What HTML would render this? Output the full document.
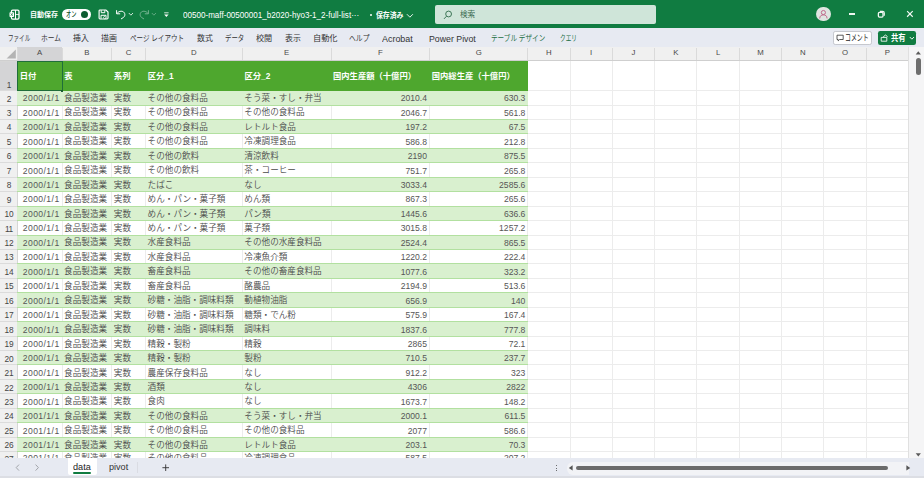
<!DOCTYPE html><html lang="ja"><head><meta charset="utf-8"><title>Excel</title><style>

html,body{margin:0;padding:0;background:#fff;}
body{width:924px;height:478px;overflow:hidden;position:relative;font-family:"Liberation Sans", "Noto Sans CJK JP", sans-serif;}
#app{position:absolute;left:0;top:0;width:924px;height:478px;overflow:hidden;}
.c{position:absolute;height:12px;line-height:12px;font-size:8.6px;color:#4a4a4a;white-space:nowrap;font-weight:350;}
.c.num{font-size:8.6px;color:#565656;font-weight:400;}
.h{position:absolute;height:12px;line-height:12px;font-size:8.3px;font-weight:700;color:#fff;white-space:nowrap;}
.rn{position:absolute;left:0.3px;width:17.2px;letter-spacing:-0.3px;height:12px;line-height:12px;font-size:8.3px;color:#444;text-align:center;white-space:nowrap;}
.cl{position:absolute;width:20px;height:12px;line-height:12px;font-size:7.8px;color:#484848;text-align:center;}
.t{position:absolute;white-space:nowrap;transform-origin:0 50%;}

</style></head><body><div id="app">
<div style="position:absolute;left:0.00px;top:0.00px;width:924.00px;height:28.40px;background:#107c41;"></div>
<div style="position:absolute;left:0.00px;top:28.40px;width:924.00px;height:19.00px;background:#e7eaf2;"></div>
<div style="position:absolute;left:0.00px;top:47.40px;width:924.00px;height:411.00px;background:#ffffff;"></div>
<div style="position:absolute;left:0.00px;top:47.40px;width:908.60px;height:13.40px;background:#f0f0f0;"></div>
<div style="position:absolute;left:0.00px;top:47.40px;width:17.20px;height:411.00px;background:#f0f0f0;"></div>
<div style="position:absolute;left:17.20px;top:47.40px;width:44.80px;height:13.40px;background:#d4d4d6;"></div>
<div style="position:absolute;left:0.00px;top:61.00px;width:17.20px;height:29.70px;background:#d4d4d6;"></div>
<svg style="position:absolute;left:0;top:47.4px" width="17.2" height="13.399999999999999" viewBox="0 0 17.2 13.4"><polygon points="15.8,2.6 15.8,11.6 6.6,11.6" fill="#b4b4b4"/></svg>
<div style="position:absolute;left:61.50px;top:60.80px;width:1.00px;height:397.60px;background:#ececec;"></div>
<div style="position:absolute;left:111.25px;top:60.80px;width:1.00px;height:397.60px;background:#ececec;"></div>
<div style="position:absolute;left:145.00px;top:60.80px;width:1.00px;height:397.60px;background:#ececec;"></div>
<div style="position:absolute;left:241.75px;top:60.80px;width:1.00px;height:397.60px;background:#ececec;"></div>
<div style="position:absolute;left:330.50px;top:60.80px;width:1.00px;height:397.60px;background:#ececec;"></div>
<div style="position:absolute;left:429.25px;top:60.80px;width:1.00px;height:397.60px;background:#ececec;"></div>
<div style="position:absolute;left:527.20px;top:60.80px;width:1.00px;height:397.60px;background:#ececec;"></div>
<div style="position:absolute;left:569.52px;top:60.80px;width:1.00px;height:397.60px;background:#ececec;"></div>
<div style="position:absolute;left:611.84px;top:60.80px;width:1.00px;height:397.60px;background:#ececec;"></div>
<div style="position:absolute;left:654.17px;top:60.80px;width:1.00px;height:397.60px;background:#ececec;"></div>
<div style="position:absolute;left:696.49px;top:60.80px;width:1.00px;height:397.60px;background:#ececec;"></div>
<div style="position:absolute;left:738.81px;top:60.80px;width:1.00px;height:397.60px;background:#ececec;"></div>
<div style="position:absolute;left:781.13px;top:60.80px;width:1.00px;height:397.60px;background:#ececec;"></div>
<div style="position:absolute;left:823.46px;top:60.80px;width:1.00px;height:397.60px;background:#ececec;"></div>
<div style="position:absolute;left:865.78px;top:60.80px;width:1.00px;height:397.60px;background:#ececec;"></div>
<div style="position:absolute;left:908.10px;top:60.80px;width:1.00px;height:397.60px;background:#ececec;"></div>
<div style="position:absolute;left:16.70px;top:48.40px;width:1.00px;height:12.40px;background:#dadada;"></div>
<div style="position:absolute;left:61.50px;top:48.40px;width:1.00px;height:12.40px;background:#dadada;"></div>
<div style="position:absolute;left:111.25px;top:48.40px;width:1.00px;height:12.40px;background:#dadada;"></div>
<div style="position:absolute;left:145.00px;top:48.40px;width:1.00px;height:12.40px;background:#dadada;"></div>
<div style="position:absolute;left:241.75px;top:48.40px;width:1.00px;height:12.40px;background:#dadada;"></div>
<div style="position:absolute;left:330.50px;top:48.40px;width:1.00px;height:12.40px;background:#dadada;"></div>
<div style="position:absolute;left:429.25px;top:48.40px;width:1.00px;height:12.40px;background:#dadada;"></div>
<div style="position:absolute;left:527.20px;top:48.40px;width:1.00px;height:12.40px;background:#dadada;"></div>
<div style="position:absolute;left:569.52px;top:48.40px;width:1.00px;height:12.40px;background:#dadada;"></div>
<div style="position:absolute;left:611.84px;top:48.40px;width:1.00px;height:12.40px;background:#dadada;"></div>
<div style="position:absolute;left:654.17px;top:48.40px;width:1.00px;height:12.40px;background:#dadada;"></div>
<div style="position:absolute;left:696.49px;top:48.40px;width:1.00px;height:12.40px;background:#dadada;"></div>
<div style="position:absolute;left:738.81px;top:48.40px;width:1.00px;height:12.40px;background:#dadada;"></div>
<div style="position:absolute;left:781.13px;top:48.40px;width:1.00px;height:12.40px;background:#dadada;"></div>
<div style="position:absolute;left:823.46px;top:48.40px;width:1.00px;height:12.40px;background:#dadada;"></div>
<div style="position:absolute;left:865.78px;top:48.40px;width:1.00px;height:12.40px;background:#dadada;"></div>
<div style="position:absolute;left:908.10px;top:48.40px;width:1.00px;height:12.40px;background:#dadada;"></div>
<div style="position:absolute;left:17.20px;top:90.20px;width:891.40px;height:1.00px;background:#ececec;"></div>
<div style="position:absolute;left:0.00px;top:90.20px;width:17.20px;height:1.00px;background:#dbdbdb;"></div>
<div style="position:absolute;left:17.20px;top:104.63px;width:891.40px;height:1.00px;background:#ececec;"></div>
<div style="position:absolute;left:0.00px;top:104.63px;width:17.20px;height:1.00px;background:#dbdbdb;"></div>
<div style="position:absolute;left:17.20px;top:119.06px;width:891.40px;height:1.00px;background:#ececec;"></div>
<div style="position:absolute;left:0.00px;top:119.06px;width:17.20px;height:1.00px;background:#dbdbdb;"></div>
<div style="position:absolute;left:17.20px;top:133.49px;width:891.40px;height:1.00px;background:#ececec;"></div>
<div style="position:absolute;left:0.00px;top:133.49px;width:17.20px;height:1.00px;background:#dbdbdb;"></div>
<div style="position:absolute;left:17.20px;top:147.92px;width:891.40px;height:1.00px;background:#ececec;"></div>
<div style="position:absolute;left:0.00px;top:147.92px;width:17.20px;height:1.00px;background:#dbdbdb;"></div>
<div style="position:absolute;left:17.20px;top:162.35px;width:891.40px;height:1.00px;background:#ececec;"></div>
<div style="position:absolute;left:0.00px;top:162.35px;width:17.20px;height:1.00px;background:#dbdbdb;"></div>
<div style="position:absolute;left:17.20px;top:176.78px;width:891.40px;height:1.00px;background:#ececec;"></div>
<div style="position:absolute;left:0.00px;top:176.78px;width:17.20px;height:1.00px;background:#dbdbdb;"></div>
<div style="position:absolute;left:17.20px;top:191.21px;width:891.40px;height:1.00px;background:#ececec;"></div>
<div style="position:absolute;left:0.00px;top:191.21px;width:17.20px;height:1.00px;background:#dbdbdb;"></div>
<div style="position:absolute;left:17.20px;top:205.64px;width:891.40px;height:1.00px;background:#ececec;"></div>
<div style="position:absolute;left:0.00px;top:205.64px;width:17.20px;height:1.00px;background:#dbdbdb;"></div>
<div style="position:absolute;left:17.20px;top:220.07px;width:891.40px;height:1.00px;background:#ececec;"></div>
<div style="position:absolute;left:0.00px;top:220.07px;width:17.20px;height:1.00px;background:#dbdbdb;"></div>
<div style="position:absolute;left:17.20px;top:234.50px;width:891.40px;height:1.00px;background:#ececec;"></div>
<div style="position:absolute;left:0.00px;top:234.50px;width:17.20px;height:1.00px;background:#dbdbdb;"></div>
<div style="position:absolute;left:17.20px;top:248.93px;width:891.40px;height:1.00px;background:#ececec;"></div>
<div style="position:absolute;left:0.00px;top:248.93px;width:17.20px;height:1.00px;background:#dbdbdb;"></div>
<div style="position:absolute;left:17.20px;top:263.36px;width:891.40px;height:1.00px;background:#ececec;"></div>
<div style="position:absolute;left:0.00px;top:263.36px;width:17.20px;height:1.00px;background:#dbdbdb;"></div>
<div style="position:absolute;left:17.20px;top:277.79px;width:891.40px;height:1.00px;background:#ececec;"></div>
<div style="position:absolute;left:0.00px;top:277.79px;width:17.20px;height:1.00px;background:#dbdbdb;"></div>
<div style="position:absolute;left:17.20px;top:292.22px;width:891.40px;height:1.00px;background:#ececec;"></div>
<div style="position:absolute;left:0.00px;top:292.22px;width:17.20px;height:1.00px;background:#dbdbdb;"></div>
<div style="position:absolute;left:17.20px;top:306.65px;width:891.40px;height:1.00px;background:#ececec;"></div>
<div style="position:absolute;left:0.00px;top:306.65px;width:17.20px;height:1.00px;background:#dbdbdb;"></div>
<div style="position:absolute;left:17.20px;top:321.08px;width:891.40px;height:1.00px;background:#ececec;"></div>
<div style="position:absolute;left:0.00px;top:321.08px;width:17.20px;height:1.00px;background:#dbdbdb;"></div>
<div style="position:absolute;left:17.20px;top:335.51px;width:891.40px;height:1.00px;background:#ececec;"></div>
<div style="position:absolute;left:0.00px;top:335.51px;width:17.20px;height:1.00px;background:#dbdbdb;"></div>
<div style="position:absolute;left:17.20px;top:349.94px;width:891.40px;height:1.00px;background:#ececec;"></div>
<div style="position:absolute;left:0.00px;top:349.94px;width:17.20px;height:1.00px;background:#dbdbdb;"></div>
<div style="position:absolute;left:17.20px;top:364.37px;width:891.40px;height:1.00px;background:#ececec;"></div>
<div style="position:absolute;left:0.00px;top:364.37px;width:17.20px;height:1.00px;background:#dbdbdb;"></div>
<div style="position:absolute;left:17.20px;top:378.80px;width:891.40px;height:1.00px;background:#ececec;"></div>
<div style="position:absolute;left:0.00px;top:378.80px;width:17.20px;height:1.00px;background:#dbdbdb;"></div>
<div style="position:absolute;left:17.20px;top:393.23px;width:891.40px;height:1.00px;background:#ececec;"></div>
<div style="position:absolute;left:0.00px;top:393.23px;width:17.20px;height:1.00px;background:#dbdbdb;"></div>
<div style="position:absolute;left:17.20px;top:407.66px;width:891.40px;height:1.00px;background:#ececec;"></div>
<div style="position:absolute;left:0.00px;top:407.66px;width:17.20px;height:1.00px;background:#dbdbdb;"></div>
<div style="position:absolute;left:17.20px;top:422.09px;width:891.40px;height:1.00px;background:#ececec;"></div>
<div style="position:absolute;left:0.00px;top:422.09px;width:17.20px;height:1.00px;background:#dbdbdb;"></div>
<div style="position:absolute;left:17.20px;top:436.52px;width:891.40px;height:1.00px;background:#ececec;"></div>
<div style="position:absolute;left:0.00px;top:436.52px;width:17.20px;height:1.00px;background:#dbdbdb;"></div>
<div style="position:absolute;left:17.20px;top:450.95px;width:891.40px;height:1.00px;background:#ececec;"></div>
<div style="position:absolute;left:0.00px;top:450.95px;width:17.20px;height:1.00px;background:#dbdbdb;"></div>
<div style="position:absolute;left:0.00px;top:60.50px;width:17.20px;height:1.00px;background:#d6d6d6;"></div>
<div style="position:absolute;left:16.70px;top:60.80px;width:1.00px;height:397.60px;background:#d6d6d6;"></div>
<div style="position:absolute;left:0.00px;top:60.30px;width:908.60px;height:1.00px;background:#cfcfcf;"></div>
<div style="position:absolute;left:17.20px;top:61.00px;width:510.50px;height:29.70px;background:#4ea72e;"></div>
<div style="position:absolute;left:17.20px;top:90.70px;width:510.50px;height:14.43px;background:#d9f0cf;"></div>
<div style="position:absolute;left:17.20px;top:90.20px;width:510.50px;height:1.00px;background:#4ea72e;"></div>
<div style="position:absolute;left:17.20px;top:104.63px;width:510.50px;height:1.00px;background:#b2e0a0;"></div>
<div style="position:absolute;left:17.20px;top:119.56px;width:510.50px;height:14.43px;background:#d9f0cf;"></div>
<div style="position:absolute;left:17.20px;top:119.06px;width:510.50px;height:1.00px;background:#b2e0a0;"></div>
<div style="position:absolute;left:17.20px;top:133.49px;width:510.50px;height:1.00px;background:#b2e0a0;"></div>
<div style="position:absolute;left:17.20px;top:148.42px;width:510.50px;height:14.43px;background:#d9f0cf;"></div>
<div style="position:absolute;left:17.20px;top:147.92px;width:510.50px;height:1.00px;background:#b2e0a0;"></div>
<div style="position:absolute;left:17.20px;top:162.35px;width:510.50px;height:1.00px;background:#b2e0a0;"></div>
<div style="position:absolute;left:17.20px;top:177.28px;width:510.50px;height:14.43px;background:#d9f0cf;"></div>
<div style="position:absolute;left:17.20px;top:176.78px;width:510.50px;height:1.00px;background:#b2e0a0;"></div>
<div style="position:absolute;left:17.20px;top:191.21px;width:510.50px;height:1.00px;background:#b2e0a0;"></div>
<div style="position:absolute;left:17.20px;top:206.14px;width:510.50px;height:14.43px;background:#d9f0cf;"></div>
<div style="position:absolute;left:17.20px;top:205.64px;width:510.50px;height:1.00px;background:#b2e0a0;"></div>
<div style="position:absolute;left:17.20px;top:220.07px;width:510.50px;height:1.00px;background:#b2e0a0;"></div>
<div style="position:absolute;left:17.20px;top:235.00px;width:510.50px;height:14.43px;background:#d9f0cf;"></div>
<div style="position:absolute;left:17.20px;top:234.50px;width:510.50px;height:1.00px;background:#b2e0a0;"></div>
<div style="position:absolute;left:17.20px;top:248.93px;width:510.50px;height:1.00px;background:#b2e0a0;"></div>
<div style="position:absolute;left:17.20px;top:263.86px;width:510.50px;height:14.43px;background:#d9f0cf;"></div>
<div style="position:absolute;left:17.20px;top:263.36px;width:510.50px;height:1.00px;background:#b2e0a0;"></div>
<div style="position:absolute;left:17.20px;top:277.79px;width:510.50px;height:1.00px;background:#b2e0a0;"></div>
<div style="position:absolute;left:17.20px;top:292.72px;width:510.50px;height:14.43px;background:#d9f0cf;"></div>
<div style="position:absolute;left:17.20px;top:292.22px;width:510.50px;height:1.00px;background:#b2e0a0;"></div>
<div style="position:absolute;left:17.20px;top:306.65px;width:510.50px;height:1.00px;background:#b2e0a0;"></div>
<div style="position:absolute;left:17.20px;top:321.58px;width:510.50px;height:14.43px;background:#d9f0cf;"></div>
<div style="position:absolute;left:17.20px;top:321.08px;width:510.50px;height:1.00px;background:#b2e0a0;"></div>
<div style="position:absolute;left:17.20px;top:335.51px;width:510.50px;height:1.00px;background:#b2e0a0;"></div>
<div style="position:absolute;left:17.20px;top:350.44px;width:510.50px;height:14.43px;background:#d9f0cf;"></div>
<div style="position:absolute;left:17.20px;top:349.94px;width:510.50px;height:1.00px;background:#b2e0a0;"></div>
<div style="position:absolute;left:17.20px;top:364.37px;width:510.50px;height:1.00px;background:#b2e0a0;"></div>
<div style="position:absolute;left:17.20px;top:379.30px;width:510.50px;height:14.43px;background:#d9f0cf;"></div>
<div style="position:absolute;left:17.20px;top:378.80px;width:510.50px;height:1.00px;background:#b2e0a0;"></div>
<div style="position:absolute;left:17.20px;top:393.23px;width:510.50px;height:1.00px;background:#b2e0a0;"></div>
<div style="position:absolute;left:17.20px;top:408.16px;width:510.50px;height:14.43px;background:#d9f0cf;"></div>
<div style="position:absolute;left:17.20px;top:407.66px;width:510.50px;height:1.00px;background:#b2e0a0;"></div>
<div style="position:absolute;left:17.20px;top:422.09px;width:510.50px;height:1.00px;background:#b2e0a0;"></div>
<div style="position:absolute;left:17.20px;top:437.02px;width:510.50px;height:14.43px;background:#d9f0cf;"></div>
<div style="position:absolute;left:17.20px;top:436.52px;width:510.50px;height:1.00px;background:#b2e0a0;"></div>
<div style="position:absolute;left:17.20px;top:450.95px;width:510.50px;height:1.00px;background:#b2e0a0;"></div>
<div style="position:absolute;left:0;top:0;width:924px;height:458.4px;overflow:hidden">
<div class="rn" style="top:92.52px">2</div>
<div class="c num" style="left:17.20px;width:42.40px;top:92.32px;text-align:right;letter-spacing:0.42px">2000/1/1</div>
<div class="c" style="left:64.10px;top:91.92px">食品製造業</div>
<div class="c" style="left:113.85px;top:91.92px">実数</div>
<div class="c" style="left:147.60px;top:91.92px">その他の食料品</div>
<div class="c" style="left:244.35px;top:91.92px">そう菜・すし・弁当</div>
<div class="c num" style="left:331.00px;width:95.95px;top:92.32px;text-align:right">2010.4</div>
<div class="c num" style="left:429.75px;width:95.65px;top:92.32px;text-align:right">630.3</div>
<div class="rn" style="top:106.97px">3</div>
<div class="c num" style="left:17.20px;width:42.40px;top:106.77px;text-align:right;letter-spacing:0.42px">2000/1/1</div>
<div class="c" style="left:64.10px;top:106.37px">食品製造業</div>
<div class="c" style="left:113.85px;top:106.37px">実数</div>
<div class="c" style="left:147.60px;top:106.37px">その他の食料品</div>
<div class="c" style="left:244.35px;top:106.37px">その他の食料品</div>
<div class="c num" style="left:331.00px;width:95.95px;top:106.77px;text-align:right">2046.7</div>
<div class="c num" style="left:429.75px;width:95.65px;top:106.77px;text-align:right">561.8</div>
<div class="rn" style="top:121.42px">4</div>
<div class="c num" style="left:17.20px;width:42.40px;top:121.22px;text-align:right;letter-spacing:0.42px">2000/1/1</div>
<div class="c" style="left:64.10px;top:120.82px">食品製造業</div>
<div class="c" style="left:113.85px;top:120.82px">実数</div>
<div class="c" style="left:147.60px;top:120.82px">その他の食料品</div>
<div class="c" style="left:244.35px;top:120.82px">レトルト食品</div>
<div class="c num" style="left:331.00px;width:95.95px;top:121.22px;text-align:right">197.2</div>
<div class="c num" style="left:429.75px;width:95.65px;top:121.22px;text-align:right">67.5</div>
<div class="rn" style="top:135.87px">5</div>
<div class="c num" style="left:17.20px;width:42.40px;top:135.67px;text-align:right;letter-spacing:0.42px">2000/1/1</div>
<div class="c" style="left:64.10px;top:135.27px">食品製造業</div>
<div class="c" style="left:113.85px;top:135.27px">実数</div>
<div class="c" style="left:147.60px;top:135.27px">その他の食料品</div>
<div class="c" style="left:244.35px;top:135.27px">冷凍調理食品</div>
<div class="c num" style="left:331.00px;width:95.95px;top:135.67px;text-align:right">586.8</div>
<div class="c num" style="left:429.75px;width:95.65px;top:135.67px;text-align:right">212.8</div>
<div class="rn" style="top:150.32px">6</div>
<div class="c num" style="left:17.20px;width:42.40px;top:150.12px;text-align:right;letter-spacing:0.42px">2000/1/1</div>
<div class="c" style="left:64.10px;top:149.72px">食品製造業</div>
<div class="c" style="left:113.85px;top:149.72px">実数</div>
<div class="c" style="left:147.60px;top:149.72px">その他の飲料</div>
<div class="c" style="left:244.35px;top:149.72px">清涼飲料</div>
<div class="c num" style="left:331.00px;width:95.95px;top:150.12px;text-align:right">2190</div>
<div class="c num" style="left:429.75px;width:95.65px;top:150.12px;text-align:right">875.5</div>
<div class="rn" style="top:164.78px">7</div>
<div class="c num" style="left:17.20px;width:42.40px;top:164.58px;text-align:right;letter-spacing:0.42px">2000/1/1</div>
<div class="c" style="left:64.10px;top:164.18px">食品製造業</div>
<div class="c" style="left:113.85px;top:164.18px">実数</div>
<div class="c" style="left:147.60px;top:164.18px">その他の飲料</div>
<div class="c" style="left:244.35px;top:164.18px">茶・コーヒー</div>
<div class="c num" style="left:331.00px;width:95.95px;top:164.58px;text-align:right">751.7</div>
<div class="c num" style="left:429.75px;width:95.65px;top:164.58px;text-align:right">265.8</div>
<div class="rn" style="top:179.23px">8</div>
<div class="c num" style="left:17.20px;width:42.40px;top:179.03px;text-align:right;letter-spacing:0.42px">2000/1/1</div>
<div class="c" style="left:64.10px;top:178.63px">食品製造業</div>
<div class="c" style="left:113.85px;top:178.63px">実数</div>
<div class="c" style="left:147.60px;top:178.63px">たばこ</div>
<div class="c" style="left:244.35px;top:178.63px">なし</div>
<div class="c num" style="left:331.00px;width:95.95px;top:179.03px;text-align:right">3033.4</div>
<div class="c num" style="left:429.75px;width:95.65px;top:179.03px;text-align:right">2585.6</div>
<div class="rn" style="top:193.68px">9</div>
<div class="c num" style="left:17.20px;width:42.40px;top:193.48px;text-align:right;letter-spacing:0.42px">2000/1/1</div>
<div class="c" style="left:64.10px;top:193.08px">食品製造業</div>
<div class="c" style="left:113.85px;top:193.08px">実数</div>
<div class="c" style="left:147.60px;top:193.08px">めん・パン・菓子類</div>
<div class="c" style="left:244.35px;top:193.08px">めん類</div>
<div class="c num" style="left:331.00px;width:95.95px;top:193.48px;text-align:right">867.3</div>
<div class="c num" style="left:429.75px;width:95.65px;top:193.48px;text-align:right">265.6</div>
<div class="rn" style="top:208.13px">10</div>
<div class="c num" style="left:17.20px;width:42.40px;top:207.93px;text-align:right;letter-spacing:0.42px">2000/1/1</div>
<div class="c" style="left:64.10px;top:207.53px">食品製造業</div>
<div class="c" style="left:113.85px;top:207.53px">実数</div>
<div class="c" style="left:147.60px;top:207.53px">めん・パン・菓子類</div>
<div class="c" style="left:244.35px;top:207.53px">パン類</div>
<div class="c num" style="left:331.00px;width:95.95px;top:207.93px;text-align:right">1445.6</div>
<div class="c num" style="left:429.75px;width:95.65px;top:207.93px;text-align:right">636.6</div>
<div class="rn" style="top:222.58px">11</div>
<div class="c num" style="left:17.20px;width:42.40px;top:222.38px;text-align:right;letter-spacing:0.42px">2000/1/1</div>
<div class="c" style="left:64.10px;top:221.98px">食品製造業</div>
<div class="c" style="left:113.85px;top:221.98px">実数</div>
<div class="c" style="left:147.60px;top:221.98px">めん・パン・菓子類</div>
<div class="c" style="left:244.35px;top:221.98px">菓子類</div>
<div class="c num" style="left:331.00px;width:95.95px;top:222.38px;text-align:right">3015.8</div>
<div class="c num" style="left:429.75px;width:95.65px;top:222.38px;text-align:right">1257.2</div>
<div class="rn" style="top:237.03px">12</div>
<div class="c num" style="left:17.20px;width:42.40px;top:236.84px;text-align:right;letter-spacing:0.42px">2000/1/1</div>
<div class="c" style="left:64.10px;top:236.44px">食品製造業</div>
<div class="c" style="left:113.85px;top:236.44px">実数</div>
<div class="c" style="left:147.60px;top:236.44px">水産食料品</div>
<div class="c" style="left:244.35px;top:236.44px">その他の水産食料品</div>
<div class="c num" style="left:331.00px;width:95.95px;top:236.84px;text-align:right">2524.4</div>
<div class="c num" style="left:429.75px;width:95.65px;top:236.84px;text-align:right">865.5</div>
<div class="rn" style="top:251.49px">13</div>
<div class="c num" style="left:17.20px;width:42.40px;top:251.29px;text-align:right;letter-spacing:0.42px">2000/1/1</div>
<div class="c" style="left:64.10px;top:250.89px">食品製造業</div>
<div class="c" style="left:113.85px;top:250.89px">実数</div>
<div class="c" style="left:147.60px;top:250.89px">水産食料品</div>
<div class="c" style="left:244.35px;top:250.89px">冷凍魚介類</div>
<div class="c num" style="left:331.00px;width:95.95px;top:251.29px;text-align:right">1220.2</div>
<div class="c num" style="left:429.75px;width:95.65px;top:251.29px;text-align:right">222.4</div>
<div class="rn" style="top:265.94px">14</div>
<div class="c num" style="left:17.20px;width:42.40px;top:265.74px;text-align:right;letter-spacing:0.42px">2000/1/1</div>
<div class="c" style="left:64.10px;top:265.34px">食品製造業</div>
<div class="c" style="left:113.85px;top:265.34px">実数</div>
<div class="c" style="left:147.60px;top:265.34px">畜産食料品</div>
<div class="c" style="left:244.35px;top:265.34px">その他の畜産食料品</div>
<div class="c num" style="left:331.00px;width:95.95px;top:265.74px;text-align:right">1077.6</div>
<div class="c num" style="left:429.75px;width:95.65px;top:265.74px;text-align:right">323.2</div>
<div class="rn" style="top:280.39px">15</div>
<div class="c num" style="left:17.20px;width:42.40px;top:280.19px;text-align:right;letter-spacing:0.42px">2000/1/1</div>
<div class="c" style="left:64.10px;top:279.79px">食品製造業</div>
<div class="c" style="left:113.85px;top:279.79px">実数</div>
<div class="c" style="left:147.60px;top:279.79px">畜産食料品</div>
<div class="c" style="left:244.35px;top:279.79px">酪農品</div>
<div class="c num" style="left:331.00px;width:95.95px;top:280.19px;text-align:right">2194.9</div>
<div class="c num" style="left:429.75px;width:95.65px;top:280.19px;text-align:right">513.6</div>
<div class="rn" style="top:294.84px">16</div>
<div class="c num" style="left:17.20px;width:42.40px;top:294.64px;text-align:right;letter-spacing:0.42px">2000/1/1</div>
<div class="c" style="left:64.10px;top:294.24px">食品製造業</div>
<div class="c" style="left:113.85px;top:294.24px">実数</div>
<div class="c" style="left:147.60px;top:294.24px">砂糖・油脂・調味料類</div>
<div class="c" style="left:244.35px;top:294.24px">動植物油脂</div>
<div class="c num" style="left:331.00px;width:95.95px;top:294.64px;text-align:right">656.9</div>
<div class="c num" style="left:429.75px;width:95.65px;top:294.64px;text-align:right">140</div>
<div class="rn" style="top:309.29px">17</div>
<div class="c num" style="left:17.20px;width:42.40px;top:309.09px;text-align:right;letter-spacing:0.42px">2000/1/1</div>
<div class="c" style="left:64.10px;top:308.69px">食品製造業</div>
<div class="c" style="left:113.85px;top:308.69px">実数</div>
<div class="c" style="left:147.60px;top:308.69px">砂糖・油脂・調味料類</div>
<div class="c" style="left:244.35px;top:308.69px">糖類・でん粉</div>
<div class="c num" style="left:331.00px;width:95.95px;top:309.09px;text-align:right">575.9</div>
<div class="c num" style="left:429.75px;width:95.65px;top:309.09px;text-align:right">167.4</div>
<div class="rn" style="top:323.75px">18</div>
<div class="c num" style="left:17.20px;width:42.40px;top:323.55px;text-align:right;letter-spacing:0.42px">2000/1/1</div>
<div class="c" style="left:64.10px;top:323.15px">食品製造業</div>
<div class="c" style="left:113.85px;top:323.15px">実数</div>
<div class="c" style="left:147.60px;top:323.15px">砂糖・油脂・調味料類</div>
<div class="c" style="left:244.35px;top:323.15px">調味料</div>
<div class="c num" style="left:331.00px;width:95.95px;top:323.55px;text-align:right">1837.6</div>
<div class="c num" style="left:429.75px;width:95.65px;top:323.55px;text-align:right">777.8</div>
<div class="rn" style="top:338.20px">19</div>
<div class="c num" style="left:17.20px;width:42.40px;top:338.00px;text-align:right;letter-spacing:0.42px">2000/1/1</div>
<div class="c" style="left:64.10px;top:337.60px">食品製造業</div>
<div class="c" style="left:113.85px;top:337.60px">実数</div>
<div class="c" style="left:147.60px;top:337.60px">精穀・製粉</div>
<div class="c" style="left:244.35px;top:337.60px">精穀</div>
<div class="c num" style="left:331.00px;width:95.95px;top:338.00px;text-align:right">2865</div>
<div class="c num" style="left:429.75px;width:95.65px;top:338.00px;text-align:right">72.1</div>
<div class="rn" style="top:352.65px">20</div>
<div class="c num" style="left:17.20px;width:42.40px;top:352.45px;text-align:right;letter-spacing:0.42px">2000/1/1</div>
<div class="c" style="left:64.10px;top:352.05px">食品製造業</div>
<div class="c" style="left:113.85px;top:352.05px">実数</div>
<div class="c" style="left:147.60px;top:352.05px">精穀・製粉</div>
<div class="c" style="left:244.35px;top:352.05px">製粉</div>
<div class="c num" style="left:331.00px;width:95.95px;top:352.45px;text-align:right">710.5</div>
<div class="c num" style="left:429.75px;width:95.65px;top:352.45px;text-align:right">237.7</div>
<div class="rn" style="top:367.10px">21</div>
<div class="c num" style="left:17.20px;width:42.40px;top:366.90px;text-align:right;letter-spacing:0.42px">2000/1/1</div>
<div class="c" style="left:64.10px;top:366.50px">食品製造業</div>
<div class="c" style="left:113.85px;top:366.50px">実数</div>
<div class="c" style="left:147.60px;top:366.50px">農産保存食料品</div>
<div class="c" style="left:244.35px;top:366.50px">なし</div>
<div class="c num" style="left:331.00px;width:95.95px;top:366.90px;text-align:right">912.2</div>
<div class="c num" style="left:429.75px;width:95.65px;top:366.90px;text-align:right">323</div>
<div class="rn" style="top:381.55px">22</div>
<div class="c num" style="left:17.20px;width:42.40px;top:381.35px;text-align:right;letter-spacing:0.42px">2000/1/1</div>
<div class="c" style="left:64.10px;top:380.95px">食品製造業</div>
<div class="c" style="left:113.85px;top:380.95px">実数</div>
<div class="c" style="left:147.60px;top:380.95px">酒類</div>
<div class="c" style="left:244.35px;top:380.95px">なし</div>
<div class="c num" style="left:331.00px;width:95.95px;top:381.35px;text-align:right">4306</div>
<div class="c num" style="left:429.75px;width:95.65px;top:381.35px;text-align:right">2822</div>
<div class="rn" style="top:396.01px">23</div>
<div class="c num" style="left:17.20px;width:42.40px;top:395.81px;text-align:right;letter-spacing:0.42px">2000/1/1</div>
<div class="c" style="left:64.10px;top:395.41px">食品製造業</div>
<div class="c" style="left:113.85px;top:395.41px">実数</div>
<div class="c" style="left:147.60px;top:395.41px">食肉</div>
<div class="c" style="left:244.35px;top:395.41px">なし</div>
<div class="c num" style="left:331.00px;width:95.95px;top:395.81px;text-align:right">1673.7</div>
<div class="c num" style="left:429.75px;width:95.65px;top:395.81px;text-align:right">148.2</div>
<div class="rn" style="top:410.46px">24</div>
<div class="c num" style="left:17.20px;width:42.40px;top:410.26px;text-align:right;letter-spacing:0.42px">2001/1/1</div>
<div class="c" style="left:64.10px;top:409.86px">食品製造業</div>
<div class="c" style="left:113.85px;top:409.86px">実数</div>
<div class="c" style="left:147.60px;top:409.86px">その他の食料品</div>
<div class="c" style="left:244.35px;top:409.86px">そう菜・すし・弁当</div>
<div class="c num" style="left:331.00px;width:95.95px;top:410.26px;text-align:right">2000.1</div>
<div class="c num" style="left:429.75px;width:95.65px;top:410.26px;text-align:right">611.5</div>
<div class="rn" style="top:424.91px">25</div>
<div class="c num" style="left:17.20px;width:42.40px;top:424.71px;text-align:right;letter-spacing:0.42px">2001/1/1</div>
<div class="c" style="left:64.10px;top:424.31px">食品製造業</div>
<div class="c" style="left:113.85px;top:424.31px">実数</div>
<div class="c" style="left:147.60px;top:424.31px">その他の食料品</div>
<div class="c" style="left:244.35px;top:424.31px">その他の食料品</div>
<div class="c num" style="left:331.00px;width:95.95px;top:424.71px;text-align:right">2077</div>
<div class="c num" style="left:429.75px;width:95.65px;top:424.71px;text-align:right">586.6</div>
<div class="rn" style="top:439.36px">26</div>
<div class="c num" style="left:17.20px;width:42.40px;top:439.16px;text-align:right;letter-spacing:0.42px">2001/1/1</div>
<div class="c" style="left:64.10px;top:438.76px">食品製造業</div>
<div class="c" style="left:113.85px;top:438.76px">実数</div>
<div class="c" style="left:147.60px;top:438.76px">その他の食料品</div>
<div class="c" style="left:244.35px;top:438.76px">レトルト食品</div>
<div class="c num" style="left:331.00px;width:95.95px;top:439.16px;text-align:right">203.1</div>
<div class="c num" style="left:429.75px;width:95.65px;top:439.16px;text-align:right">70.3</div>
<div class="rn" style="top:452.61px">27</div>
<div class="c num" style="left:17.20px;width:42.40px;top:452.41px;text-align:right;letter-spacing:0.42px">2001/1/1</div>
<div class="c" style="left:64.10px;top:452.01px">食品製造業</div>
<div class="c" style="left:113.85px;top:452.01px">実数</div>
<div class="c" style="left:147.60px;top:452.01px">その他の食料品</div>
<div class="c" style="left:244.35px;top:452.01px">冷凍調理食品</div>
<div class="c num" style="left:331.00px;width:95.95px;top:452.41px;text-align:right">587.5</div>
<div class="c num" style="left:429.75px;width:95.65px;top:452.41px;text-align:right">207.2</div>
</div>
<div class="rn" style="top:79.40px">1</div>
<div class="h" style="left:19.80px;top:70.25px">日付</div>
<div class="h" style="left:64.20px;top:70.25px">表</div>
<div class="h" style="left:113.95px;top:70.25px">系列</div>
<div class="h" style="left:147.70px;top:70.25px">区分_1</div>
<div class="h" style="left:244.45px;top:70.25px">区分_2</div>
<div class="h" style="left:333.00px;top:70.25px">国内生産額（十億円）</div>
<div class="h" style="left:431.75px;top:70.25px">国内総生産（十億円）</div>
<div style="position:absolute;left:16.90px;top:60.80px;width:45.70px;height:30.30px;border:1px solid #1f6e3a;box-sizing:border-box"></div>
<div style="position:absolute;left:61.10px;top:89.80px;width:2.20px;height:2.20px;background:#1a5c31;"></div>
<div class="cl" style="left:29.60px;top:47.30px">A</div>
<div class="cl" style="left:76.88px;top:47.30px">B</div>
<div class="cl" style="left:118.62px;top:47.30px">C</div>
<div class="cl" style="left:183.88px;top:47.30px">D</div>
<div class="cl" style="left:276.62px;top:47.30px">E</div>
<div class="cl" style="left:370.38px;top:47.30px">F</div>
<div class="cl" style="left:468.73px;top:47.30px">G</div>
<div class="cl" style="left:538.86px;top:47.30px">H</div>
<div class="cl" style="left:581.18px;top:47.30px">I</div>
<div class="cl" style="left:623.51px;top:47.30px">J</div>
<div class="cl" style="left:665.83px;top:47.30px">K</div>
<div class="cl" style="left:708.15px;top:47.30px">L</div>
<div class="cl" style="left:750.47px;top:47.30px">M</div>
<div class="cl" style="left:792.79px;top:47.30px">N</div>
<div class="cl" style="left:835.12px;top:47.30px">O</div>
<div class="cl" style="left:877.44px;top:47.30px">P</div>
<div style="position:absolute;left:908.60px;top:47.40px;width:15.40px;height:411.00px;background:#f5f5f6;"></div>
<div style="position:absolute;left:908.20px;top:47.40px;width:0.80px;height:411.00px;background:#e0e0e0;"></div>
<div style="position:absolute;left:915.60px;top:57.80px;width:5.00px;height:17.40px;background:#6e6e6e;border-radius:2.5px"></div>
<svg style="position:absolute;left:914px;top:49.5px" width="9" height="6" viewBox="0 0 9 6"><polygon points="4.3,1.2 6.9,4.6 1.7,4.6" fill="#5a5a5a"/></svg>
<svg style="position:absolute;left:913.9px;top:451.6px" width="9" height="6" viewBox="0 0 9 6"><polygon points="1.7,1.2 6.9,1.2 4.3,4.6" fill="#5a5a5a"/></svg>
<div style="position:absolute;left:0.00px;top:458.40px;width:924.00px;height:19.60px;background:#e7eaf2;"></div>
<div style="position:absolute;left:0.00px;top:476.30px;width:924.00px;height:1.70px;background:#dcdee4;"></div>
<div style="position:absolute;left:68.20px;top:458.40px;width:29.20px;height:16.70px;background:#ffffff;border-radius:0 0 2px 2px"></div>
<div style="position:absolute;left:73.20px;top:472.30px;width:17.80px;height:1.30px;background:#107c41;border-radius:1px"></div>
<div style="position:absolute;left:136.60px;top:462.00px;width:0.80px;height:11.00px;background:#dadce3;"></div>
<svg style="position:absolute;left:13px;top:462px" width="30" height="12" viewBox="0 0 30 12"><polyline points="6,2.6 3.2,5.6 6,8.6" fill="none" stroke="#9a9ca2" stroke-width="0.9"/><polyline points="22.6,2.6 25.4,5.6 22.6,8.6" fill="none" stroke="#9a9ca2" stroke-width="0.9"/></svg>
<svg style="position:absolute;left:160px;top:462px" width="12" height="12" viewBox="0 0 12 12"><path d="M5.7 2.4v6.6M2.4 5.7h6.6" stroke="#333" stroke-width="0.9" fill="none"/></svg>
<div style="position:absolute;left:566.80px;top:461.60px;width:342.00px;height:13.20px;background:#f2f3f6;border-radius:6px 0 0 6px"></div>
<div style="position:absolute;left:576.20px;top:465.60px;width:311.60px;height:4.50px;background:#6b6b6b;border-radius:2.3px"></div>
<svg style="position:absolute;left:567px;top:464px" width="8" height="8" viewBox="0 0 8 8"><polygon points="5.6,1.2 5.6,6.6 1.8,3.9" fill="#555"/></svg>
<svg style="position:absolute;left:903.6px;top:463.9px" width="8" height="8" viewBox="0 0 8 8"><polygon points="2.4,1.2 2.4,6.6 6.2,3.9" fill="#555"/></svg>
<div style="position:absolute;left:555.70px;top:465.30px;width:1.10px;height:1.10px;background:#444;border-radius:50%"></div>
<div style="position:absolute;left:555.70px;top:467.60px;width:1.10px;height:1.10px;background:#444;border-radius:50%"></div>
<div style="position:absolute;left:555.70px;top:469.90px;width:1.10px;height:1.10px;background:#444;border-radius:50%"></div>
<div style="position:absolute;left:832.90px;top:31.10px;width:39.60px;height:14.30px;background:#ffffff;border:0.8px solid #c6c8ce;border-radius:2.2px;box-sizing:border-box"></div>
<div style="position:absolute;left:877.90px;top:31.10px;width:38.60px;height:14.30px;background:#107c41;border-radius:2.2px"></div>
<svg style="position:absolute;left:835.5px;top:33.6px" width="9" height="9" viewBox="0 0 9 9"><path d="M1 1.2h6.2v4.3H3.6L2.2 6.9V5.5H1z" fill="none" stroke="#333" stroke-width="0.8" stroke-linejoin="round"/></svg>
<svg style="position:absolute;left:880.3px;top:33.2px" width="10" height="10" viewBox="0 0 10 10"><path d="M1.2 4.4h5.6v3.8H1.2zM3 4.2l2.4-2.2 2.2 1.6" fill="none" stroke="#fff" stroke-width="0.85" stroke-linejoin="round"/></svg>
<svg style="position:absolute;left:908.6px;top:36.4px" width="6" height="5" viewBox="0 0 6 5"><polyline points="0.8,1 2.9,3.2 5,1" fill="none" stroke="#fff" stroke-width="0.9"/></svg>
<svg style="position:absolute;left:9.2px;top:8.6px" width="11" height="11" viewBox="0 0 11 11"><rect x="2.4" y="1.1" width="7.6" height="8.9" rx="1.3" fill="none" stroke="#fff" stroke-width="1.25"/><path d="M6.5 1v9" stroke="#fff" stroke-width="1"/><path d="M6.5 5.5h3.5" stroke="#fff" stroke-width="0.8"/><rect x="0.5" y="3.2" width="4.5" height="4.7" rx="0.7" fill="#fff"/><path d="M1.8 4.3l1.9 2.5M3.7 4.3l-1.9 2.5" stroke="#107c41" stroke-width="0.75"/></svg>
<div style="position:absolute;left:62.00px;top:8.50px;width:29.20px;height:11.60px;background:#ffffff;border-radius:5.8px"></div>
<div style="position:absolute;left:80.70px;top:10.80px;width:7.00px;height:7.00px;background:#0c5c30;border-radius:50%"></div>
<svg style="position:absolute;left:97.6px;top:8.9px" width="11" height="11" viewBox="0 0 11 11"><path d="M1.1 1.9a.9.9 0 0 1 .9-.9h5.9L10 3.1v6a.9.9 0 0 1-.9.9H2a.9.9 0 0 1-.9-.9z" fill="none" stroke="#fff" stroke-width="1.15"/><path d="M3.2 1.2v2.5h3.6V1.2M3 9.8V6.3h5v3.5" fill="none" stroke="#fff" stroke-width="1"/><path d="M6.9 7.4a1.2 1.2 0 1 0 .9 1.6" fill="none" stroke="#fff" stroke-width="0.7"/></svg>
<svg style="position:absolute;left:114.6px;top:9px" width="12" height="11" viewBox="0 0 12 11"><path d="M1.6 1.2v3.6h3.6" fill="none" stroke="#fff" stroke-width="1"/><path d="M1.8 4.6C3.4 2.4 6.6 1.4 8.6 3c2 1.7 1.5 4.4-.4 5.6L6 10" fill="none" stroke="#fff" stroke-width="1"/></svg>
<svg style="position:absolute;left:128px;top:11.6px" width="6" height="5" viewBox="0 0 6 5"><polyline points="0.8,1 2.9,3.2 5,1" fill="none" stroke="#fff" stroke-width="0.8"/></svg>
<svg style="position:absolute;left:138px;top:9px;opacity:.42" width="12" height="11" viewBox="0 0 12 11"><path d="M10.4 1.2v3.6H6.8" fill="none" stroke="#fff" stroke-width="1"/><path d="M10.2 4.6C8.6 2.4 5.4 1.4 3.4 3c-2 1.7-1.5 4.4.4 5.6L6 10" fill="none" stroke="#fff" stroke-width="1"/></svg>
<svg style="position:absolute;left:151px;top:11.6px;opacity:.42" width="6" height="5" viewBox="0 0 6 5"><polyline points="0.8,1 2.9,3.2 5,1" fill="none" stroke="#fff" stroke-width="0.8"/></svg>
<svg style="position:absolute;left:162.6px;top:10.6px" width="7" height="8" viewBox="0 0 7 8"><path d="M1.2 1.8h4.4" stroke="#fff" stroke-width="0.8"/><polygon points="1.2,3.6 5.6,3.6 3.4,6" fill="#fff"/></svg>
<div style="position:absolute;left:369.50px;top:13.90px;width:2.60px;height:2.60px;background:#fff;border-radius:50%"></div>
<svg style="position:absolute;left:405.8px;top:12.6px" width="8" height="6" viewBox="0 0 8 6"><polyline points="0.9,1.2 3.9,4.2 6.9,1.2" fill="none" stroke="#fff" stroke-width="0.9"/></svg>
<div style="position:absolute;left:435.20px;top:5.00px;width:221.00px;height:18.50px;background:#cfe5d9;border-radius:2px"></div>
<svg style="position:absolute;left:443px;top:10.0px" width="10" height="10" viewBox="0 0 10 10"><circle cx="5.6" cy="4" r="2.9" fill="none" stroke="#2f6b4a" stroke-width="0.9"/><path d="M3.5 6.2L1 8.9" stroke="#2f6b4a" stroke-width="0.9"/></svg>
<div style="position:absolute;left:815.80px;top:6.50px;width:14.80px;height:14.80px;background:#dfe5e1;border-radius:50%"></div>
<svg style="position:absolute;left:815.8px;top:6.5px" width="14.8" height="14.8" viewBox="0 0 15 15"><circle cx="7.5" cy="5.6" r="2.1" fill="none" stroke="#bd5c82" stroke-width="0.9"/><path d="M3.8 11.6c0-2.6 1.6-3.6 3.7-3.6s3.7 1 3.7 3.6" fill="none" stroke="#bd5c82" stroke-width="0.9"/></svg>
<div style="position:absolute;left:848.60px;top:13.30px;width:6.50px;height:1.25px;background:#eef6f0;"></div>
<svg style="position:absolute;left:876.8px;top:9.6px" width="8.6" height="8.6" viewBox="0 0 10 10"><rect x="1.6" y="2.8" width="5.4" height="5.4" rx="1.2" fill="none" stroke="#f2f8f4" stroke-width="1.5"/><path d="M3.4 1.6h3.2a1.8 1.8 0 0 1 1.8 1.8v3.2" fill="none" stroke="#f2f8f4" stroke-width="1.5"/></svg>
<svg style="position:absolute;left:905.9px;top:10.4px" width="8" height="8" viewBox="0 0 10 10"><path d="M1.4 1.4l7 7M8.4 1.4l-7 7" stroke="#f4faf6" stroke-width="1.45"/></svg>
<span class="t" id="t0" style="left:73.20px;top:459.60px;height:14px;line-height:14px;font-size:9.3px;color:#222;font-weight:400;transform:scaleX(0.9829);">data</span>
<span class="t" id="t1" style="left:108.80px;top:460.00px;height:14px;line-height:14px;font-size:9.3px;color:#333;font-weight:400;transform:scaleX(0.9776);">pivot</span>
<span class="t" id="t2" style="left:7.50px;top:31.50px;height:14px;line-height:14px;font-size:8.1px;color:#333;font-weight:400;transform:scaleX(0.6854);">ファイル</span>
<span class="t" id="t3" style="left:40.80px;top:31.50px;height:14px;line-height:14px;font-size:8.1px;color:#333;font-weight:400;transform:scaleX(0.8317);">ホーム</span>
<span class="t" id="t4" style="left:72.50px;top:31.50px;height:14px;line-height:14px;font-size:8.1px;color:#333;font-weight:400;transform:scaleX(0.9751);">挿入</span>
<span class="t" id="t5" style="left:100.80px;top:31.50px;height:14px;line-height:14px;font-size:8.1px;color:#333;font-weight:400;transform:scaleX(0.9813);">描画</span>
<span class="t" id="t6" style="left:129.70px;top:31.50px;height:14px;line-height:14px;font-size:8.1px;color:#333;font-weight:400;transform:scaleX(0.8079);">ページ レイアウト</span>
<span class="t" id="t7" style="left:196.70px;top:31.50px;height:14px;line-height:14px;font-size:8.1px;color:#333;font-weight:400;transform:scaleX(0.9751);">数式</span>
<span class="t" id="t8" style="left:225.00px;top:31.50px;height:14px;line-height:14px;font-size:8.1px;color:#333;font-weight:400;transform:scaleX(0.7902);">データ</span>
<span class="t" id="t9" style="left:256.30px;top:31.50px;height:14px;line-height:14px;font-size:8.1px;color:#333;font-weight:400;transform:scaleX(0.9998);">校閲</span>
<span class="t" id="t10" style="left:284.70px;top:31.50px;height:14px;line-height:14px;font-size:8.1px;color:#333;font-weight:400;transform:scaleX(0.9751);">表示</span>
<span class="t" id="t11" style="left:312.50px;top:31.50px;height:14px;line-height:14px;font-size:8.1px;color:#333;font-weight:400;transform:scaleX(1.0084);">自動化</span>
<span class="t" id="t12" style="left:348.70px;top:31.50px;height:14px;line-height:14px;font-size:8.1px;color:#333;font-weight:400;transform:scaleX(0.8437);">ヘルプ</span>
<span class="t" id="t13" style="left:382.00px;top:31.50px;height:14px;line-height:14px;font-size:9.0px;color:#333;font-weight:400;transform:scaleX(0.9925);">Acrobat</span>
<span class="t" id="t14" style="left:429.00px;top:31.50px;height:14px;line-height:14px;font-size:9.0px;color:#333;font-weight:400;transform:scaleX(0.9744);">Power Pivot</span>
<span class="t" id="t15" style="left:490.70px;top:31.50px;height:14px;line-height:14px;font-size:8.1px;color:#1c7044;font-weight:400;transform:scaleX(0.8163);">テーブル デザイン</span>
<span class="t" id="t16" style="left:559.70px;top:31.50px;height:14px;line-height:14px;font-size:8.1px;color:#1c7044;font-weight:400;transform:scaleX(0.6956);">クエリ</span>
<span class="t" id="t17" style="left:844.60px;top:31.40px;height:14px;line-height:14px;font-size:8.6px;color:#222;font-weight:400;transform:scaleX(0.6862);">コメント</span>
<span class="t" id="t18" style="left:891.00px;top:31.40px;height:14px;line-height:14px;font-size:8.6px;color:#fff;font-weight:700;transform:scaleX(0.8487);">共有</span>
<span class="t" id="t19" style="left:29.60px;top:7.60px;height:14px;line-height:14px;font-size:7.4px;color:#fff;font-weight:700;transform:scaleX(0.9466);">自動保存</span>
<span class="t" id="t20" style="left:66.40px;top:7.50px;height:14px;line-height:14px;font-size:7.6px;color:#0e4f2a;font-weight:500;transform:scaleX(0.6848);">オン</span>
<span class="t" id="t21" style="left:183.40px;top:8.00px;height:14px;line-height:14px;font-size:8.3px;color:#fff;font-weight:400;transform:scaleX(0.9729);">00500-maff-00500001_b2020-hyo3-1_2-full-list···</span>
<span class="t" id="t22" style="left:375.90px;top:8.50px;height:14px;line-height:14px;font-size:7.6px;color:#fff;font-weight:700;transform:scaleX(0.9053);">保存済み</span>
<span class="t" id="t23" style="left:460.40px;top:8.00px;height:14px;line-height:14px;font-size:7.8px;color:#3a6a50;font-weight:400;transform:scaleX(0.9747);">検索</span>
</div></body></html>
